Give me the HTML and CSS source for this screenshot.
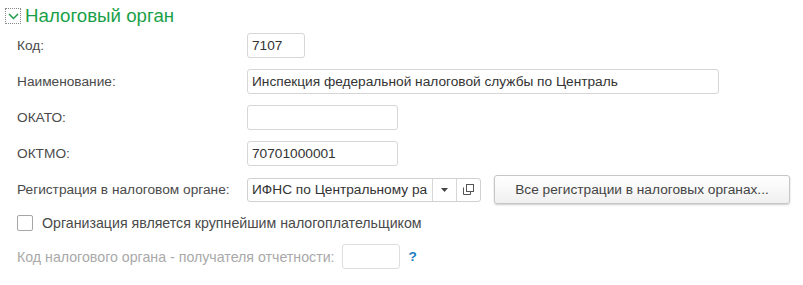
FILE: index.html
```html
<!doctype html>
<html lang="ru">
<head>
    <meta charset="UTF-8">
    <title>Налоговый орган</title>
    <link rel="stylesheet" href="styles.css">
</head>
<body>
    <div class="group-header">
        <span class="toggle">
            <svg width="11" height="7" viewBox="0 0 11 7"><path d="M1 1 L5.5 5.5 L10 1" fill="none" stroke="#1a9f48" stroke-width="1.5"/></svg>
        </span>
        <span class="group-title">Налоговый орган</span>
    </div>
    <div class="form">
        <div class="row">
            <div class="label">Код:</div>
            <div class="field w-short">7107</div>
        </div>
        <div class="row">
            <div class="label">Наименование:</div>
            <div class="field w-long">Инспекция федеральной налоговой службы по Централь</div>
        </div>
        <div class="row">
            <div class="label">ОКАТО:</div>
            <div class="field w-mid"></div>
        </div>
        <div class="row">
            <div class="label">ОКТМО:</div>
            <div class="field w-mid">70701000001</div>
        </div>
        <div class="row row-reg">
            <div class="label">Регистрация в налоговом органе:</div>
            <div class="combo">
                <div class="combo-text">ИФНС по Центральному ра</div>
                <div class="combo-btn">
                    <svg width="7" height="4" viewBox="0 0 7 4"><path d="M0 0 H7 L3.5 4 Z" fill="#444"/></svg>
                </div>
                <div class="combo-btn">
                    <svg width="11" height="11" viewBox="0 0 11 11"><rect x="3.5" y="0.5" width="7" height="7" fill="none" stroke="#555"/><path d="M0.5 3.5 V10.5 H7.5 V8" fill="none" stroke="#555"/></svg>
                </div>
            </div>
            <button class="button">Все регистрации в налоговых органах...</button>
        </div>
        <div class="check-row">
            <span class="checkbox"></span>
            <span class="check-label">Организация является крупнейшим налогоплательщиком</span>
        </div>
        <div class="row row-disabled">
            <div class="label-auto">Код налогового органа - получателя отчетности:</div>
            <div class="field w-short disabled"></div>
            <span class="help">?</span>
        </div>
    </div>
</body>
</html>
```
FILE: styles.css
```css
body {
    margin: 0;
    font-family: "Liberation Sans", Arial, sans-serif;
    font-size: 13.7px;
    color: #4a4a4a;
    background: #fff;
}
.group-header {
    display: flex;
    align-items: center;
    padding: 7px 0 0 5px;
    height: 18px;
}
.toggle {
    width: 14px;
    height: 14px;
    border: 1px dotted #888;
    display: flex;
    align-items: center;
    justify-content: center;
}
.group-title {
    margin-left: 4px;
    font-size: 18.7px;
    color: #1a9f48;
}
.form {
    padding-left: 17px;
    padding-top: 8px;
}
.row {
    display: flex;
    align-items: center;
    height: 25px;
    margin-bottom: 11px;
}
.label {
    width: 230px;
    flex: none;
}
.field {
    box-sizing: border-box;
    height: 25px;
    border: 1px solid #d6d6d6;
    border-radius: 3px;
    padding: 0 4px;
    line-height: 23px;
    color: #333;
    white-space: nowrap;
    overflow: hidden;
}
.w-short {
    width: 58px;
}
.w-mid {
    width: 151px;
}
.w-long {
    width: 472px;
}
.row-reg {
    margin-bottom: 12px;
}
.combo {
    box-sizing: border-box;
    display: flex;
    width: 234px;
    height: 24px;
    border: 1px solid #d0d0d0;
    border-radius: 3px;
}
.combo-text {
    flex: 1;
    padding: 0 4px;
    line-height: 22px;
    color: #333;
    white-space: nowrap;
    overflow: hidden;
}
.combo-btn {
    width: 23px;
    flex: none;
    border-left: 1px solid #d6d6d6;
    display: flex;
    align-items: center;
    justify-content: center;
}
.button {
    margin-left: 13px;
    width: 296px;
    height: 29px;
    font-family: inherit;
    font-size: 13.7px;
    color: #444;
    background: linear-gradient(#ffffff, #f0f0f0);
    border: 1px solid #c6c6c6;
    border-radius: 3px;
    box-shadow: 0 1px 2px rgba(0, 0, 0, 0.2);
}
.check-row {
    display: flex;
    align-items: center;
    height: 18px;
    margin-top: 3px;
    margin-bottom: 12px;
}
.checkbox {
    box-sizing: border-box;
    width: 16px;
    height: 16px;
    border: 1px solid #a6a6a6;
    border-radius: 2px;
}
.check-label {
    margin-left: 9px;
    font-size: 14.2px;
}
.row-disabled {
    color: #a9a9a9;
}
.label-auto {
    margin-right: 7px;
    font-size: 14.2px;
}
.disabled {
    border-color: #dedede;
}
.help {
    margin-left: 9px;
    color: #1f7bc0;
    font-weight: bold;
}
```
